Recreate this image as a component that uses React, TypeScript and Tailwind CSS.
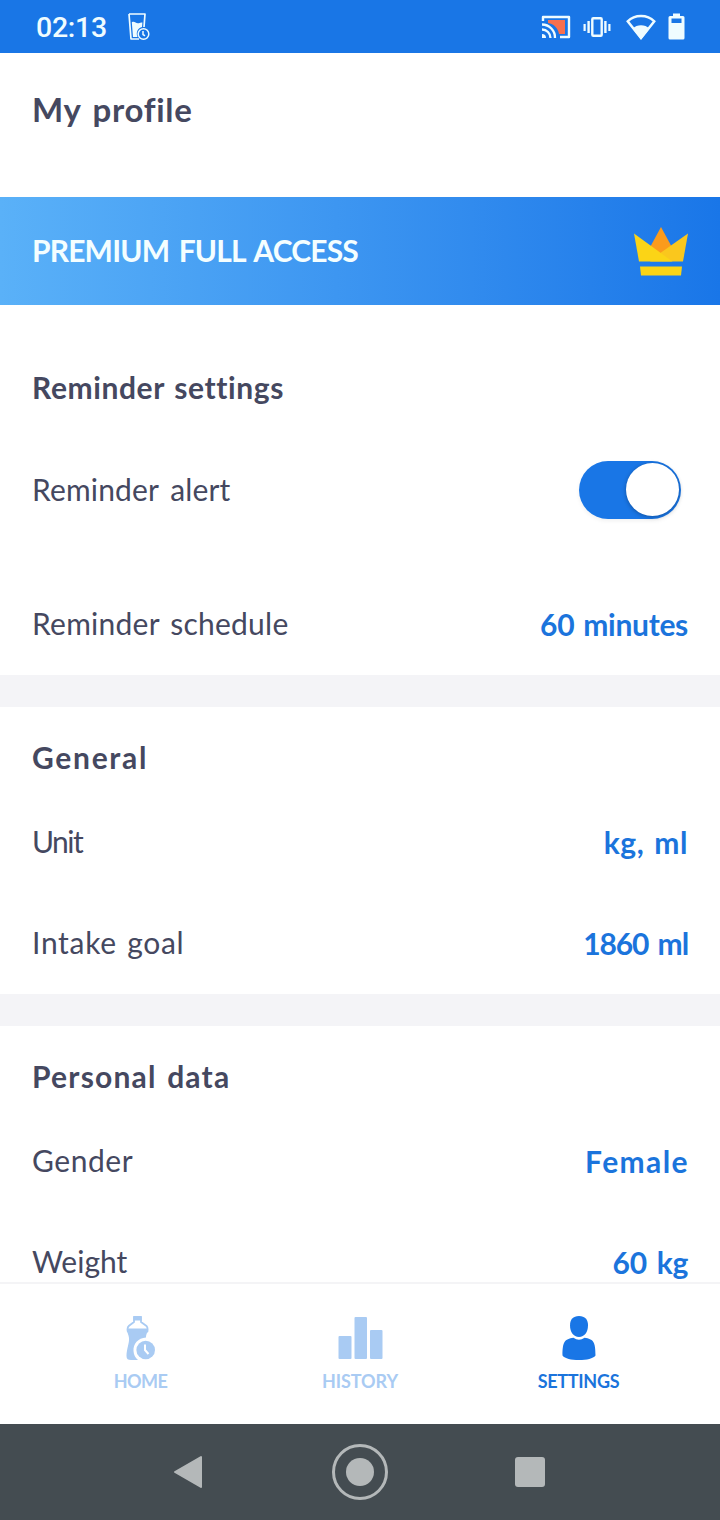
import { useState } from 'react';

function StatusBar() {
  return (
    <div className="flex h-[53px] shrink-0 items-center bg-[#1976e6] pl-[36px] pr-[35px] text-[#effcff]">
      <span className="mt-[3px] w-[71px] font-[Roboto] text-[28.500px] leading-none font-medium tracking-[-0.300px]">02:13</span>
      <svg className="ml-[20px] h-[30px] w-[24px]" viewBox="0 0 24 30" fill="none">
        <path d="M2 2h16l-1 13M2 2l2 25h8" stroke="currentColor" strokeWidth="1.7" strokeLinejoin="round" />
        <path d="M4.800 10.200c3-1.600 4 1.800 7 1 1.500-.5 2.500-1 3.600-.6L15 15c-4 1-6.500 5-4.500 10H6z" fill="currentColor" />
        <circle cx="16.500" cy="22" r="5.300" stroke="currentColor" strokeWidth="1.500" />
        <path d="M16 19v3.500l2 1.300" stroke="currentColor" strokeWidth="1.500" />
      </svg>
      <div className="ml-auto flex items-center">
        <svg className="h-[24px] w-[30px]" viewBox="0 0 30 24" fill="none">
          <path d="M7 5h17v14h-6C17 13 13 9 7 8z" fill="#f9704e" />
          <path d="M2 6V2h26v20h-9" stroke="currentColor" strokeWidth="2.400" strokeLinejoin="round" />
          <path d="M1 9.500A13 13 0 0 1 14 23M1 14.500A8.500 8.500 0 0 1 9.500 23" stroke="currentColor" strokeWidth="2.300" />
          <path d="M1 19a4 4 0 0 1 4 4H1z" fill="currentColor" />
        </svg>
        <svg className="ml-[12px] h-[22px] w-[28px]" viewBox="0 0 28 22" fill="none" stroke="currentColor">
          <rect x="9.300" y="2.300" width="9.400" height="17.400" rx="1" strokeWidth="2.400" />
          <path d="M5.600 5v12M22.400 5v12" strokeWidth="2.400" />
          <path d="M1.600 8v7M26.400 8v7" strokeWidth="2.200" />
        </svg>
        <svg className="ml-[15px] h-[26px] w-[30px]" viewBox="0 0 30 26">
          <path d="M15 2C9.500 2 5 4 1.700 7.300L15 24 28.300 7.300C25 4 20.500 2 15 2z" fill="none" stroke="currentColor" strokeWidth="2.400" />
          <path d="M15 25.500L6.500 14.500C11 10 19 10 23.500 14.500z" fill="currentColor" />
        </svg>
        <svg className="ml-[12px] h-[27px] w-[17px]" viewBox="0 0 17 27">
          <path
            fillRule="evenodd"
            d="M5 .5h7V3h3a1.500 1.500 0 0 1 1.500 1.500V25a1.500 1.500 0 0 1-1.500 1.500H2A1.500 1.500 0 0 1 .5 25V4.500A1.500 1.500 0 0 1 2 3h3zM3.500 5.500V10h10V5.500z"
            fill="currentColor"
          />
        </svg>
      </div>
    </div>
  );
}

function PremiumBanner() {
  return (
    <div className="flex h-[108px] items-center justify-between bg-linear-to-r from-[#5ab1f8] to-[#1976e8] px-[32px]">
      <span className="-mt-[2px] text-[30px] font-bold tracking-[-0.830px] text-[#f4feff] [word-spacing:3px]">
        PREMIUM FULL ACCESS
      </span>
      <svg className="h-[50px] w-[54px]" viewBox="0 0 54 50">
        <path d="M27 1l13 24-13 8-13-8z" fill="#fb9b1c" />
        <path d="M54 7.500L49 35.500H16L27 26.500z" fill="#fac71d" />
        <path d="M0 7.500L38.500 35.500H5z" fill="#fbd416" />
        <path d="M6 40.500h42L47 49.500H7z" fill="#fbd416" />
      </svg>
    </div>
  );
}

function Toggle() {
  const [on, setOn] = useState(true);

  return (
    <button
      type="button"
      role="switch"
      aria-checked={on}
      aria-label="Reminder alert"
      onClick={() => setOn(!on)}
      className={`mr-[7px] flex h-[58px] w-[102px] items-center rounded-full px-[2.5px] shadow-[0_2px_4px_rgba(0,0,0,0.06)] ${
        on ? 'justify-end bg-[#1976e6]' : 'justify-start bg-gray-300'
      }`}
    >
      <span className="size-[53px] rounded-full bg-white shadow-[0_1px_4px_rgba(0,0,0,0.3)]" />
    </button>
  );
}

function Title({ text, className }: { text: string; className: string }) {
  return <h2 className={`flex h-[68px] items-center pb-[2px] text-[30px] font-bold ${className}`}>{text}</h2>;
}

type RowProps = {
  label: string;
  labelClass?: string;
  value?: string;
  valueClass?: string;
  className?: string;
  children?: React.ReactNode;
};

function Row({ label, labelClass = '', value, valueClass = '', className = '', children }: RowProps) {
  return (
    <div className={`flex h-[101px] items-center justify-between ${className}`}>
      <span className={`pb-[2px] text-[30px] ${labelClass}`}>{label}</span>
      {value && <span className={`text-[30px] font-bold text-[#1b74dc] ${valueClass}`}>{value}</span>}
      {children}
    </div>
  );
}

function TabBar() {
  return (
    <nav className="grid h-[142px] shrink-0 grid-cols-[281px_158px_281px] border-t-2 border-[#f4f4f6] text-[18px] leading-[24px] font-bold">
      <button type="button" className="flex flex-col items-center pt-[32px] text-[#a9cbf3]">
        <svg className="h-[45px] w-[30px]" viewBox="0 0 30 45">
          <path
            d="M8 1h7v5l5.500 4c1.300 1.200 1.500 2 .9 5.500H1.800C1 12 1.500 11 3 9.800L8 6z"
            fill="none"
            stroke="currentColor"
            strokeWidth="1.800"
            strokeLinejoin="round"
          />
          <path d="M7.500 0h8v4.500h-8z" fill="currentColor" />
          <path
            d="M1 12.500h21c0 4-2 5-2 9C12 22 7 28 7.500 35c.2 4 2 7 4.500 9H5c-3 0-4.500-1-4.500-4C.5 33 3.500 27 3 22c-.3-3-2-5.500-2-9.500z"
            fill="currentColor"
          />
          <circle cx="19.700" cy="34" r="9.300" fill="currentColor" />
          <path d="M19 28.500v5.500l3.500 4" fill="none" stroke="white" strokeWidth="2" />
        </svg>
        <span className="mt-[8px] tracking-[-0.600px]">HOME</span>
      </button>
      <button type="button" className="flex flex-col items-center pt-[31px] text-[#a9cbf3]">
        <svg className="h-[45px] w-[45px]" viewBox="0 0 45 45" fill="currentColor">
          <rect x="0.500" y="21" width="13" height="23" rx="1" />
          <rect x="16.500" y="2" width="12.500" height="42" rx="1" />
          <rect x="32" y="15" width="12.500" height="29" rx="1" />
        </svg>
        <span className="mt-[9px] tracking-[-0.100px]">HISTORY</span>
      </button>
      <button type="button" className="flex flex-col items-center pt-[31px] text-[#1976e6]">
        <svg className="mr-[2px] h-[45px] w-[34px]" viewBox="0 0 34 45" fill="currentColor">
          <path d="M17 1c6 0 9 3.500 9 9.500C26 17 22.500 22 17 22S8 17 8 10.500C8 4.500 11 1 17 1z" />
          <path d="M11.500 22.800c3.500 2.500 7.500 2.500 11 0C31.500 24 33.500 27 33.500 40.500 31 43.800 25 45 17 45S3 43.800.5 40.500C.5 27 2.500 24 11.500 22.800z" />
        </svg>
        <span className="mt-[9px] mr-[2px] tracking-[-0.300px] text-[#1b74dc]">SETTINGS</span>
      </button>
    </nav>
  );
}

function SystemBar() {
  return (
    <div className="flex h-[96px] shrink-0 items-center justify-between bg-[#444c51] pl-[173px] pr-[175px] text-[#b4b8b9]">
      <svg className="h-[34px] w-[30px]" viewBox="0 0 30 34" fill="currentColor">
        <path d="M2 17L28 2v30z" stroke="currentColor" strokeWidth="2" strokeLinejoin="round" />
      </svg>
      <span className="ml-[2px] flex size-[56px] items-center justify-center rounded-full border-[3px] border-current">
        <span className="size-[28px] rounded-full bg-current" />
      </span>
      <span className="size-[30px] rounded-[3px] bg-current" />
    </div>
  );
}

function App() {
  return (
    <div className="flex h-[1520px] w-[720px] flex-col overflow-hidden bg-white font-[Lato,sans-serif] text-[#454860]">
      <StatusBar />
      <main className="min-h-0 flex-1 overflow-hidden whitespace-nowrap">
        <header className="flex h-[144px] items-start px-[32px] pt-[36px]">
          <h1 className="text-[33px] leading-[40px] font-bold tracking-[0.700px] [word-spacing:3px]">My profile</h1>
        </header>
        <PremiumBanner />
        <section className="px-[32px] pt-[49px]">
          <Title text="Reminder settings" className="tracking-[0.600px] [word-spacing:2px]" />
          <Row label="Reminder alert" labelClass="pt-[2px] tracking-[0.150px] [word-spacing:4px]" className="mt-[17px]">
            <Toggle />
          </Row>
          <Row
            label="Reminder schedule"
            labelClass="tracking-[0.250px] [word-spacing:3px]"
            value="60 minutes"
            valueClass="tracking-[-0.300px] [word-spacing:2px]"
            className="mt-[34px]"
          />
        </section>
        <div className="h-[32px] bg-[#f4f4f7]" />
        <section className="px-[32px] pt-[17px]">
          <Title text="General" className="tracking-[1.700px]" />
          <Row
            label="Unit"
            labelClass="tracking-[-1.500px]"
            value="kg, ml"
            valueClass="tracking-[0.600px] [word-spacing:2px]"
          />
          <Row
            label="Intake goal"
            labelClass="tracking-[0.700px] [word-spacing:2px]"
            value="1860 ml"
            valueClass="tracking-[-1.100px] [word-spacing:3px]"
          />
        </section>
        <div className="h-[32px] bg-[#f4f4f7]" />
        <section className="px-[32px] pt-[17px]">
          <Title text="Personal data" className="tracking-[1.200px] [word-spacing:2px]" />
          <Row label="Gender" labelClass="tracking-[0.550px]" value="Female" valueClass="-mr-px tracking-[1.400px]" />
          <Row label="Weight" value="60 kg" valueClass="tracking-[-0.300px] [word-spacing:3px]" />
        </section>
      </main>
      <TabBar />
      <SystemBar />
    </div>
  );
}

export default App;
